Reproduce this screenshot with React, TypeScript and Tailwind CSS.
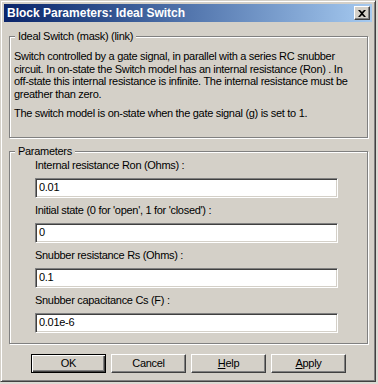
const params = [
  { label: 'Internal resistance Ron (Ohms) :', value: '0.01' },
  { label: "Initial state (0 for 'open', 1 for 'closed') :", value: '0' },
  { label: 'Snubber resistance Rs (Ohms) :', value: '0.1' },
  { label: 'Snubber capacitance Cs (F) :', value: '0.01e-6' },
]

const desc = [
  'Switch controlled by a gate signal, in parallel with a series RC snubber',
  'circuit. In on-state the Switch model has an internal resistance (Ron) . In',
  'off-state this internal resistance is infinite. The internal resistance must be',
  'greather than zero.',
]

function GroupBox({ title, className, children }: { title: string; className?: string; children: React.ReactNode }) {
  // etched frame: gray line with a white line beside it
  return (
    <div
      className={`relative border border-[#808080] shadow-[inset_1px_1px_0_#fff,1px_1px_0_#fff] ${className ?? ''}`}
    >
      <span className="absolute -top-[7px] left-[5px] bg-[#d4d0c8] px-[3px] leading-[12px]">{title}</span>
      {children}
    </div>
  )
}

function Button({ children, primary }: { children: React.ReactNode; primary?: boolean }) {
  const bevel = primary
    ? 'border border-black shadow-[inset_1px_1px_0_#fff,inset_-1px_-1px_0_#404040,inset_-2px_-2px_0_#808080]'
    : 'border border-t-white border-l-white border-r-[#404040] border-b-[#404040] shadow-[inset_-1px_-1px_0_#808080]'
  return (
    <button className={`w-[75px] h-[19px] bg-[#d4d0c8] flex items-center justify-center leading-none ${bevel}`}>
      {children}
    </button>
  )
}

export default function App() {
  return (
    <div className="w-[378px] h-[384px] bg-[#dcdad4] font-['Liberation_Sans',Arial,sans-serif] text-[11px] tracking-[-0.3px] text-black">
      <div className="w-[376px] h-[382px] bg-[#d4d0c8] border border-t-[#d4d0c8] border-l-[#d4d0c8] border-r-[#404040] border-b-[#404040] shadow-[inset_1px_1px_0_#fff,inset_-1px_-1px_0_#808080] p-[3px]">
        {/* title bar */}
        <div className="h-[18px] flex items-center justify-between bg-linear-to-r from-[#0a246a] to-[#a6caf0] pl-[3px] pr-[2px]">
          <span className="text-white font-bold text-[12px] tracking-normal leading-none">Block Parameters: Ideal Switch</span>
          <button className="w-[16px] h-[14px] bg-[#d4d0c8] border border-t-white border-l-white border-r-[#404040] border-b-[#404040] shadow-[inset_-1px_-1px_0_#808080] flex items-center justify-center">
            <svg width="8" height="7" viewBox="0 0 8 7" className="block">
              <path d="M0 0h2l2 2 2-2h2L5 3.5 8 7H6L4 5 2 7H0l3-3.5z" fill="#000" />
            </svg>
          </button>
        </div>

        <div className="pl-[5px] pr-[4px] pt-[14px]">
          <GroupBox title="Ideal Switch (mask) (link)" className="h-[102px] pl-[4px] pt-[13px]">
            <div className="leading-[12.5px]">
              {desc.map(line => (
                <div key={line} className="whitespace-nowrap">{line}</div>
              ))}
            </div>
            <p className="leading-[12.5px] mt-[7px]">The switch model is on-state when the gate signal (g) is set to 1.</p>
          </GroupBox>

          <GroupBox title="Parameters" className="h-[193px] mt-[13px] pl-[25px] pr-[29px] pt-[7px]">
            {params.map(p => (
              <div key={p.label} className="flex flex-col">
                <label className="leading-[12.5px] whitespace-nowrap">{p.label}</label>
                <div className="mt-[6px] mb-[6.5px] h-[20px] bg-white border border-t-[#808080] border-l-[#808080] border-r-white border-b-white shadow-[inset_1px_1px_0_#404040,inset_-1px_-1px_0_#d4d0c8] flex items-center pl-[3px]">
                  {p.value}
                </div>
              </div>
            ))}
          </GroupBox>

          <div className="mt-[10px] flex justify-center gap-[5px]">
            <Button primary>OK</Button>
            <Button>Cancel</Button>
            <Button>
              <span><span className="underline underline-offset-1">H</span>elp</span>
            </Button>
            <Button>
              <span><span className="underline underline-offset-1">A</span>pply</span>
            </Button>
          </div>
        </div>
      </div>
    </div>
  )
}
